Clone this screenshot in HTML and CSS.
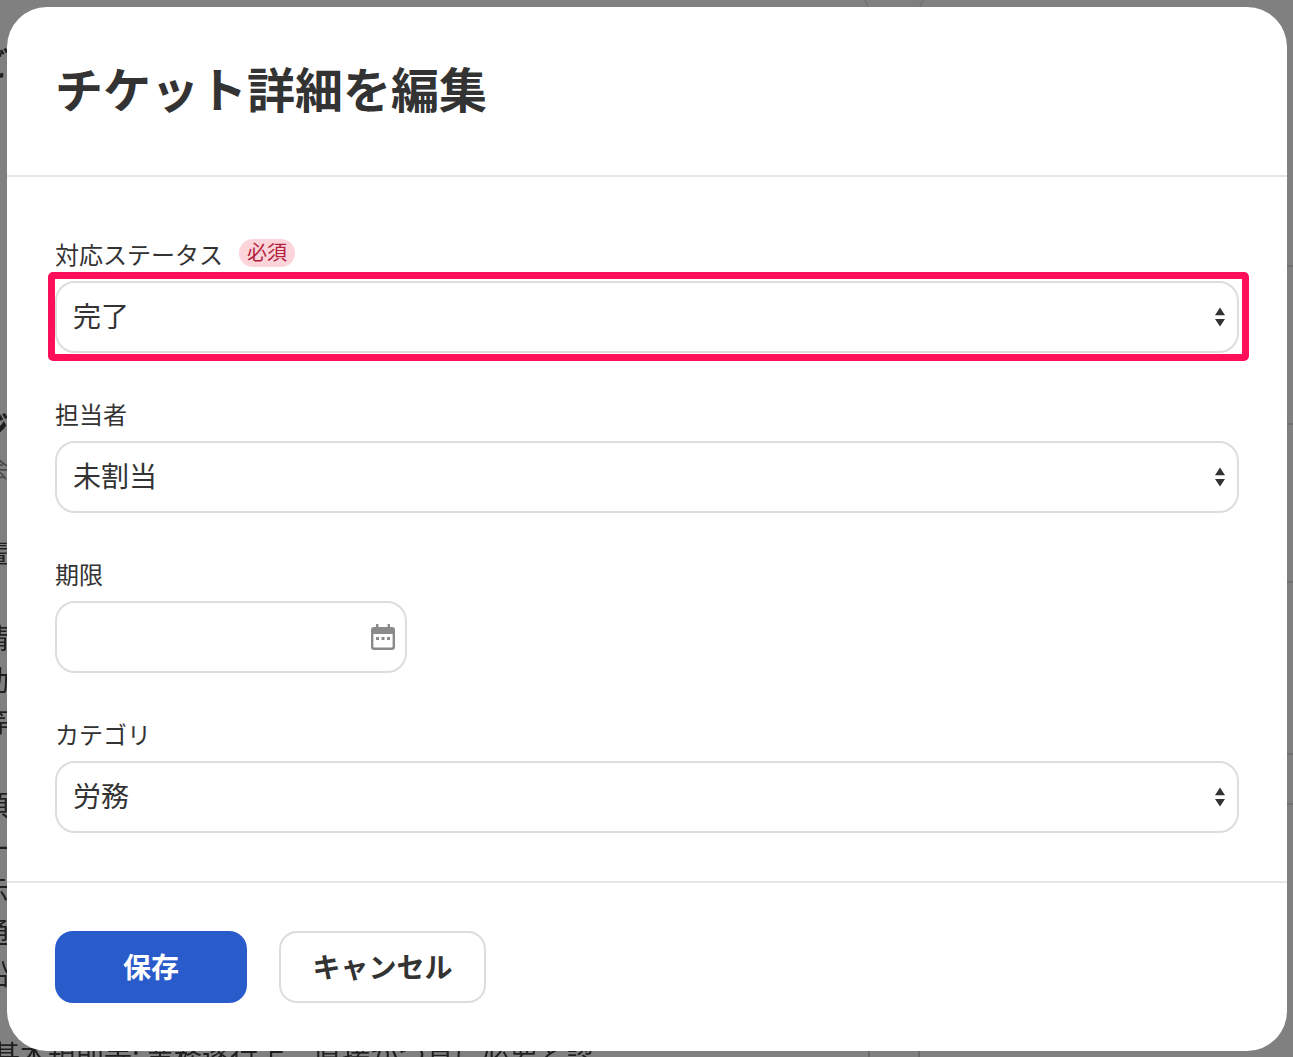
FILE: index.html
```html
<!DOCTYPE html>
<html lang="ja">
<head>
<meta charset="utf-8">
<title>チケット詳細を編集</title>
<link rel="stylesheet" href="styles.css">
</head>
<body>
<div class="backdrop" aria-hidden="true">
  <span class="peek peek-a">ご</span>
  <span class="peek peek-b">ジ</span>
  <span class="peek peek-c">会</span>
  <span class="peek peek-d">輩</span>
  <span class="peek peek-e">精</span>
  <span class="peek peek-f">効</span>
  <span class="peek peek-g">等</span>
  <span class="peek peek-h">預</span>
  <span class="peek peek-i">一</span>
  <span class="peek peek-j">示</span>
  <span class="peek peek-k">通</span>
  <span class="peek peek-l">鉛</span>
  <span class="peek-bottom">基本規則等: 業務遂行上、直接かつ真に必要と認</span>
  <i class="rule rule-1"></i><i class="rule rule-2"></i><i class="rule rule-3"></i><i class="rule rule-4"></i><i class="rule rule-5"></i>
  <i class="col col-1"></i><i class="col col-2"></i>
  <i class="slant slant-1"></i><i class="slant slant-2"></i>
</div>
<main class="modal">
  <header class="modal-header">
    <h1 class="modal-title">チケット詳細を編集</h1>
  </header>
  <form class="modal-body">
    <div class="field">
      <label class="field-label" for="status">対応ステータス<span class="badge">必須</span></label>
      <div class="control control-focus">
        <select id="status" class="input"><option>完了</option></select>
        <svg class="updown" viewBox="0 0 12 20" aria-hidden="true"><path d="M6 0.5 11 8.3H1ZM1 12H11L6 19.5Z"/></svg>
        <span class="highlight"></span>
      </div>
    </div>
    <div class="field">
      <label class="field-label" for="owner">担当者</label>
      <div class="control">
        <select id="owner" class="input"><option>未割当</option></select>
        <svg class="updown" viewBox="0 0 12 20" aria-hidden="true"><path d="M6 0.5 11 8.3H1ZM1 12H11L6 19.5Z"/></svg>
      </div>
    </div>
    <div class="field">
      <label class="field-label" for="due">期限</label>
      <div class="control control-date">
        <input id="due" class="input" type="text">
        <svg class="calendar" viewBox="0 0 24 26" aria-hidden="true">
          <path fill-rule="evenodd" d="M5 0h2.4v3h9.2V0H19v3h2a3 3 0 0 1 3 3v17a3 3 0 0 1-3 3H3a3 3 0 0 1-3-3V6a3 3 0 0 1 3-3h2ZM2.4 10v12.4c0 .7.5 1.2 1.2 1.2h16.8c.7 0 1.2-.5 1.2-1.2V10Z"/>
          <rect x="5" y="13" width="3" height="3"/><rect x="10.5" y="13" width="3" height="3"/><rect x="16" y="13" width="3" height="3"/>
        </svg>
      </div>
    </div>
    <div class="field">
      <label class="field-label" for="category">カテゴリ</label>
      <div class="control">
        <select id="category" class="input"><option>労務</option></select>
        <svg class="updown" viewBox="0 0 12 20" aria-hidden="true"><path d="M6 0.5 11 8.3H1ZM1 12H11L6 19.5Z"/></svg>
      </div>
    </div>
  </form>
  <footer class="modal-footer">
    <button class="btn btn-primary" type="button">保存</button>
    <button class="btn btn-secondary" type="button">キャンセル</button>
  </footer>
</main>
</body>
</html>
```
FILE: styles.css
```css
* { box-sizing: border-box; }
html, body { height: 100%; }
body {
  margin: 0;
  padding: 7px 6px 6px 7px;
  background: #808080;
  overflow: hidden;
  font-family: "Noto Sans CJK JP", "Noto Sans", sans-serif;
  color: #333;
}

/* page dimmed behind the dialog */
.backdrop { position: fixed; inset: 0; overflow: hidden; color: #1f1f1f; }
.peek { position: absolute; left: -19px; font-size: 28px; line-height: 36px; }
.peek-a { top: 44px; font-weight: 700; font-size: 32px; left: -23px; }
.peek-b { top: 407px; font-weight: 700; font-size: 32px; left: -23px; }
.peek-c { top: 449px; font-size: 24px; left: -15px; color: #4a4a4a; }
.peek-d { top: 535px; }
.peek-e { top: 619px; }
.peek-f { top: 661px; }
.peek-g { top: 703px; }
.peek-h { top: 786px; }
.peek-i { top: 829px; }
.peek-j { top: 871px; }
.peek-k { top: 913px; }
.peek-l { top: 955px; }
.peek-bottom {
  position: absolute;
  left: -8px;
  top: 1036px;
  font-size: 28px;
  line-height: 36px;
  white-space: nowrap;
}
.rule { position: absolute; right: 0; width: 8px; height: 2px; background: #707070; }
.rule-1 { top: 265px; }
.rule-2 { top: 423px; }
.rule-3 { top: 581px; }
.rule-4 { top: 753px; }
.rule-5 { top: 803px; }
.col { position: absolute; bottom: 0; width: 2px; height: 8px; background: #6a6a6a; }
.col-1 { left: 868px; }
.col-2 { left: 918px; }
.slant { position: absolute; top: -1px; width: 1px; height: 9px; background: #6a6a6a; }
.slant-1 { left: 866px; transform: rotate(-22deg); }
.slant-2 { left: 921px; transform: rotate(28deg); }

.modal {
  position: relative;
  display: flex;
  flex-direction: column;
  height: 100%;
  background: #fff;
  border-radius: 40px;
}
.modal-header { padding: 48px; border-bottom: 2px solid #e6e6e6; }
.modal-title { margin: 0; padding-bottom: 8px; font-size: 48px; line-height: 64px; font-weight: 700; color: #333; }
.modal-body { flex: 1; display: flex; flex-direction: column; gap: 44px; padding: 60px 48px 48px; }
.field { display: flex; flex-direction: column; gap: 8px; }
.field-label { display: flex; align-items: center; height: 36px; padding-bottom: 3px; font-size: 24px; line-height: 32px; color: #333; }
.badge {
  display: inline-block;
  margin: -1px 0 0 16px;
  padding: 0 8px;
  height: 28px;
  font-size: 20px;
  line-height: 26px;
  color: #b3213d;
  background: #fbd5da;
  border-radius: 14px;
}
.control { position: relative; }
.control-date { width: 352px; }
.input {
  display: block;
  width: 100%;
  height: 72px;
  padding: 0 40px 4px 16px;
  font: 400 28px/40px "Noto Sans CJK JP", "Noto Sans", sans-serif;
  color: #333;
  background: #fff;
  border: 2px solid #ddd;
  border-radius: 20px;
  appearance: none;
  outline: none;
}
.updown { position: absolute; right: 12px; top: 26px; width: 14px; height: 20px; fill: #333; pointer-events: none; }
.calendar { position: absolute; right: 12px; top: 23px; width: 24px; height: 26px; fill: #8a8a8a; pointer-events: none; }
.highlight {
  position: absolute;
  left: -7px;
  right: -10px;
  top: -9px;
  bottom: -8px;
  border: 7px solid #ff0f5a;
  border-radius: 5px;
  pointer-events: none;
}
.modal-footer { display: flex; gap: 32px; padding: 48px; border-top: 2px solid #e6e6e6; }
.btn {
  height: 72px;
  padding: 0 0 2px;
  font: 700 28px/40px "Noto Sans CJK JP", "Noto Sans", sans-serif;
  border-radius: 18px;
  cursor: pointer;
}
.btn-primary { width: 192px; color: #fff; background: #2a5bcb; border: 0; }
.btn-secondary { width: 207px; color: #333; background: #fff; border: 2px solid #ddd; }
```
